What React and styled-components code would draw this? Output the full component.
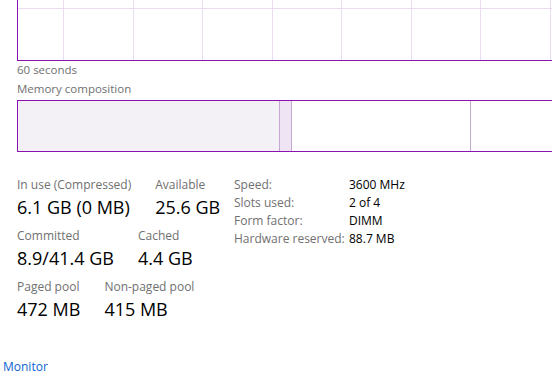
import styled, { createGlobalStyle } from 'styled-components';

const GlobalStyle = createGlobalStyle`
  html, body {
    margin: 0;
    padding: 0;
    background: #fff;
    overflow: hidden;
  }
  body {
    font-family: "Segoe UI", "Open Sans", "Noto Sans", sans-serif;
  }
`;

const Page = styled.div`
  width: 552px;
  height: 378px;
  overflow: hidden;
  display: flex;
  flex-direction: column;
  position: relative;
`;

const Section = styled.div`
  padding-left: 17px;
  display: flex;
  flex-direction: column;
`;

const Graph = styled.div`
  width: 560px;
  height: 60px;
  border-left: 1px solid #8b12ae;
  border-bottom: 1px solid #8b12ae;
  overflow: hidden;

  svg {
    display: block;
  }
`;

const Caption = styled.div`
  font-size: 11.5px;
  line-height: 19px;
  color: #707070;
  margin-top: ${(props) => props.$top || 0}px;
`;

const CompositionBar = styled.div`
  margin-top: 2px;
  width: 560px;
  height: 50px;
  display: flex;
  border: 1px solid #8b12ae;
  border-right: none;
`;

const Segment = styled.div`
  width: ${(props) => props.$width}px;
  flex: ${(props) => (props.$grow ? 1 : 'none')};
  background: ${(props) => props.$fill};
  border-right: ${(props) => (props.$grow ? 'none' : '1px solid #c6a8d5')};
`;

const Stats = styled.div`
  display: flex;
  align-items: flex-start;
  margin-top: 25px;
  padding-left: 17px;
`;

const LeftStats = styled.div`
  width: 217px;
  display: flex;
  flex-direction: column;
  gap: 7px;
`;

const StatRow = styled.div`
  display: flex;
  gap: 24px;
`;

const Stat = styled.div`
  display: flex;
  flex-direction: column;
`;

const StatLabel = styled.div`
  font-size: 12px;
  line-height: 16px;
  color: #707070;
  white-space: nowrap;
`;

const StatValue = styled.div`
  font-size: 18px;
  line-height: 28px;
  color: #000;
  white-space: nowrap;
`;

const Details = styled.div`
  display: grid;
  grid-template-columns: 115px auto;
  row-gap: 2px;
  font-size: 12px;
  line-height: 16px;
`;

const DetailLabel = styled.div`
  color: #707070;
`;

const DetailValue = styled.div`
  color: #000;
`;

const MonitorLink = styled.a`
  position: absolute;
  left: 3px;
  top: 359px;
  font-size: 12px;
  line-height: 16px;
  color: #0a64d2;
  text-decoration: none;
`;

const gridX = [45.5, 115.5, 184.5, 254.5, 323.5, 393.5, 462.5, 532.5];

const GraphGrid = () => (
  <svg width="560" height="60">
    <line x1="0" y1="8.5" x2="560" y2="8.5" stroke="#ecdcf1" strokeWidth="1" />
    {gridX.map((x) => (
      <line key={x} x1={x} y1="0" x2={x} y2="60" stroke="#ecdcf1" strokeWidth="1" />
    ))}
  </svg>
);

const stats = [
  [
    { label: 'In use (Compressed)', value: '6.1 GB (0 MB)' },
    { label: 'Available', value: '25.6 GB' }
  ],
  [
    { label: 'Committed', value: '8.9/41.4 GB' },
    { label: 'Cached', value: '4.4 GB' }
  ],
  [
    { label: 'Paged pool', value: '472 MB' },
    { label: 'Non-paged pool', value: '415 MB' }
  ]
];

const details = [
  ['Speed:', '3600 MHz'],
  ['Slots used:', '2 of 4'],
  ['Form factor:', 'DIMM'],
  ['Hardware reserved:', '88.7 MB']
];

export default function App() {
  return (
    <Page>
      <GlobalStyle />
      <Section>
        <Graph>
          <GraphGrid />
        </Graph>
        <Caption $top={-1}>60 seconds</Caption>
        <Caption>Memory composition</Caption>
        <CompositionBar>
          <Segment $width={261} $fill="#f3f0f6" />
          <Segment $width={11} $fill="#efe4f3" />
          <Segment $width={178} $fill="#fff" />
          <Segment $grow $fill="#fff" />
        </CompositionBar>
      </Section>
      <Stats>
        <LeftStats>
          {stats.map((row, i) => (
            <StatRow key={i}>
              {row.map((s) => (
                <Stat key={s.label}>
                  <StatLabel>{s.label}</StatLabel>
                  <StatValue>{s.value}</StatValue>
                </Stat>
              ))}
            </StatRow>
          ))}
        </LeftStats>
        <Details>
          {details.map(([k, v]) => [
            <DetailLabel key={k}>{k}</DetailLabel>,
            <DetailValue key={v}>{v}</DetailValue>
          ])}
        </Details>
      </Stats>
      <MonitorLink href="#">Monitor</MonitorLink>
    </Page>
  );
}
